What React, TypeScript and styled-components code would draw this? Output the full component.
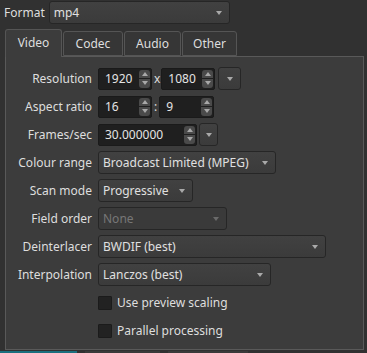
import { Fragment } from 'react'
import styled, { createGlobalStyle } from 'styled-components'

const GlobalStyle = createGlobalStyle`
  html, body {
    margin: 0;
    background: #313131;
    font-family: "Noto Sans", "Open Sans", sans-serif;
    font-size: 12px;
    color: #dedede;
  }
  * { box-sizing: border-box; }
`

const Page = styled.div`
  width: 367px;
  height: 353px;
  overflow: hidden;
  padding: 1px 4px 0 5px;
  display: flex;
  flex-direction: column;
`

const TopRow = styled.div`
  display: flex;
  align-items: center;
  gap: 4px;
  margin-left: -1px;
`

const Label = styled.span`
  color: #dedede;
  white-space: nowrap;
`

const Arrow = styled.span<{ muted?: boolean }>`
  width: 0;
  height: 0;
  border-left: 3.5px solid transparent;
  border-right: 3.5px solid transparent;
  border-top: 4px solid ${p => (p.muted ? '#6a6a6a' : '#a9a9a9')};
  flex: none;
`

const Combo = styled.div<{ w: number; disabled?: boolean }>`
  width: ${p => p.w}px;
  height: 23px;
  display: flex;
  align-items: center;
  justify-content: space-between;
  padding: 0 7px 0 4px;
  border: 1px solid #262626;
  border-radius: 3px;
  background: ${p => (p.disabled ? '#3a3a3a' : 'linear-gradient(#414141, #3b3b3b)')};
  color: ${p => (p.disabled ? '#777' : '#e0e0e0')};
  white-space: nowrap;
`

const DropButton = styled.div<{ w: number }>`
  width: ${p => p.w}px;
  height: 23px;
  display: flex;
  align-items: center;
  justify-content: center;
  border: 1px solid #262626;
  border-radius: 3px;
  background: linear-gradient(#414141, #3b3b3b);
`

const Tabs = styled.div`
  display: flex;
  align-items: flex-end;
  gap: 1px;
  margin-top: 5px;
  height: 27px;
  position: relative;
  z-index: 1;
`

const Tab = styled.div<{ active?: boolean; w: number }>`
  width: ${p => p.w}px;
  height: ${p => (p.active ? 28 : 25)}px;
  display: flex;
  align-items: center;
  justify-content: center;
  padding-bottom: ${p => (p.active ? 2 : 0)}px;
  border: 1px solid #555;
  border-bottom: ${p => (p.active ? 'none' : '1px solid #555')};
  border-radius: 3px 3px 0 0;
  background: ${p => (p.active ? '#3c3c3c' : '#363636')};
  color: #dedede;
  margin-bottom: ${p => (p.active ? -1 : 0)}px;
`

const Panel = styled.div`
  width: 359px;
  height: 294px;
  border: 1px solid #595959;
  background: #3c3c3c;
  padding-top: 10px;
`

const Form = styled.div`
  display: grid;
  grid-template-columns: 86px auto;
  column-gap: 6px;
  row-gap: 5px;
  grid-auto-rows: 23px;
  align-items: center;
`

const RowLabel = styled.span`
  text-align: right;
  white-space: nowrap;
  color: #dedede;
`

const Controls = styled.div`
  display: flex;
  align-items: center;
`

const Spin = styled.div<{ w: number }>`
  width: ${p => p.w}px;
  height: 22px;
  display: flex;
  align-items: center;
  justify-content: space-between;
  padding: 0 1px 0 6px;
  border: 1px solid #1a1a1a;
  border-radius: 2px;
  background: #1f1f1f;
  color: #e4e4e4;
`

const SpinButtons = styled.div`
  width: 11px;
  height: 18px;
  display: flex;
  flex-direction: column;
  gap: 1px;
`

const SpinHalf = styled.div<{ up?: boolean }>`
  flex: 1;
  display: flex;
  align-items: center;
  justify-content: center;
  background: #4a4a4a;
  border-radius: ${p => (p.up ? '3px 3px 0 0' : '0 0 3px 3px')};

  &::after {
    content: '';
    border-left: 3.5px solid transparent;
    border-right: 3.5px solid transparent;
    ${p => (p.up ? 'border-bottom' : 'border-top')}: 4px solid #a8a8a8;
  }
`

const Sep = styled.span<{ l: number; r: number }>`
  margin: 0 ${p => p.r}px 0 ${p => p.l}px;
  color: #dedede;
`

const CheckRow = styled.div`
  grid-column: 2;
  height: 21px;
  display: flex;
  align-items: center;
  gap: 5px;
`

const CheckBox = styled.span`
  width: 14px;
  height: 14px;
  background: #222;
  border: 1px solid #1b1b1b;
  border-radius: 1px;
`

const Footer = styled.div`
  display: flex;
  gap: 8px;
  margin: 1px 0 0 -5px;
  height: 2px;
`

const FooterBit = styled.div<{ w: number; c: string }>`
  width: ${p => p.w}px;
  background: ${p => p.c};
`

const SpinBox = ({ value, w }: { value: string; w: number }) => (
  <Spin w={w}>
    <span>{value}</span>
    <SpinButtons>
      <SpinHalf up />
      <SpinHalf />
    </SpinButtons>
  </Spin>
)

const ComboBox = ({ value, w, disabled }: { value: string; w: number; disabled?: boolean }) => (
  <Combo w={w} disabled={disabled}>
    <span>{value}</span>
    <Arrow muted={disabled} />
  </Combo>
)

const tabs = [
  { name: 'Video', w: 57, active: true },
  { name: 'Codec', w: 60 },
  { name: 'Audio', w: 57 },
  { name: 'Other', w: 55 },
]

const combos = [
  { label: 'Colour range', value: 'Broadcast Limited (MPEG)', w: 178 },
  { label: 'Scan mode', value: 'Progressive', w: 95 },
  { label: 'Field order', value: 'None', w: 129, disabled: true },
  { label: 'Deinterlacer', value: 'BWDIF (best)', w: 228 },
  { label: 'Interpolation', value: 'Lanczos (best)', w: 173 },
]

export default function App() {
  return (
    <Page>
      <GlobalStyle />
      <TopRow>
        <Label>Format</Label>
        <ComboBox value="mp4" w={181} />
      </TopRow>
      <Tabs>
        {tabs.map(t => (
          <Tab key={t.name} w={t.w} active={t.active}>{t.name}</Tab>
        ))}
      </Tabs>
      <Panel>
        <Form>
          <RowLabel>Resolution</RowLabel>
          <Controls>
            <SpinBox value="1920" w={54} />
            <Sep l={2} r={1}>x</Sep>
            <SpinBox value="1080" w={54} />
            <Sep l={3} r={0} />
            <DropButton w={23}><Arrow /></DropButton>
          </Controls>

          <RowLabel>Aspect ratio</RowLabel>
          <Controls>
            <SpinBox value="16" w={54} />
            <Sep l={2} r={2}>:</Sep>
            <SpinBox value="9" w={55} />
          </Controls>

          <RowLabel>Frames/sec</RowLabel>
          <Controls>
            <SpinBox value="30.000000" w={99} />
            <Sep l={2} r={0} />
            <DropButton w={19}><Arrow /></DropButton>
          </Controls>

          {combos.map(c => (
            <Fragment key={c.label}>
              <RowLabel>{c.label}</RowLabel>
              <ComboBox value={c.value} w={c.w} disabled={c.disabled} />
            </Fragment>
          ))}

          <CheckRow>
            <CheckBox />
            <span>Use preview scaling</span>
          </CheckRow>
          <CheckRow>
            <CheckBox />
            <span>Parallel processing</span>
          </CheckRow>
        </Form>
      </Panel>
      <Footer>
        <FooterBit w={77} c="#1b6f7e" />
        <FooterBit w={75} c="#3a3a3a" />
        <FooterBit w={80} c="#3a3a3a" />
      </Footer>
    </Page>
  )
}
